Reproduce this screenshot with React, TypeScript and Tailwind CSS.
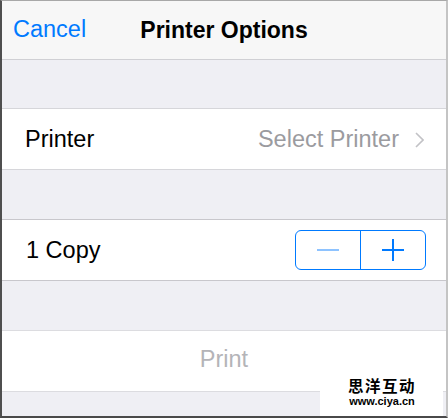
export default function App() {
  return (
    <main
      className="relative h-[418px] w-[448px] overflow-hidden border-t border-r-2 border-b-2 border-l-2 border-t-[#a8a8a8] border-r-[#c4c4c4] border-b-[#4a4a4a] border-l-[#4f4f4f] bg-[#efeff4]"
      style={{ fontFamily: '"Liberation Sans", Arial, sans-serif' }}
    >
      {/* Nav bar */}
      <header className="relative flex h-[59px] items-center border-b border-[#d0d0d4] bg-[#f7f7f7] px-[11px]">
        <button className="text-[23.5px] text-[#007aff]">Cancel</button>
        <h1 className="pointer-events-none absolute left-0 right-0 text-center text-[23px] font-bold text-black">
          Printer Options
        </h1>
      </header>

      <div className="h-[48px]" />

      {/* Printer row */}
      <div className="flex h-[62px] items-center border-y border-[#d6d6da] bg-white pl-[23px] pr-[22px] pt-[2px]">
        <span className="flex-1 text-[23.5px] text-black">Printer</span>
        <span className="text-[23.5px] text-[#9b9b9f]">Select Printer</span>
        <svg width="9" height="16" viewBox="0 0 9 16" className="ml-[16px]">
          <path d="M1 1l7 7-7 7" fill="none" stroke="#c2c2c6" strokeWidth="1.6" />
        </svg>
      </div>

      <div className="h-[49px]" />

      {/* Copies row */}
      <div className="flex h-[62px] items-center border-y border-[#c8c7cc] bg-white pl-[24px] pr-[20px]">
        <span className="flex-1 pt-[2px] text-[23.5px] text-black">1 Copy</span>
        <div className="flex h-[40px] w-[131px] rounded-[6px] border border-[#007aff]">
          <button className="flex flex-1 items-center justify-center border-r border-[#007aff]">
            <span className="block h-[2px] w-[22px] bg-[#8ec3ff]" />
          </button>
          <button className="flex flex-1 items-center justify-center">
            <svg width="22" height="22" viewBox="0 0 22 22">
              <path d="M11 0v22M0 11h22" stroke="#007aff" strokeWidth="2" />
            </svg>
          </button>
        </div>
      </div>

      <div className="h-[49px]" />

      {/* Print row */}
      <div className="flex h-[62px] items-center justify-center border-y border-[#dcdce0] bg-white pb-[3px]">
        <span className="text-[23.5px] text-[#b4b4b8]">Print</span>
      </div>

      {/* Watermark */}
      <div className="absolute bottom-0 right-[3px] h-[27px] w-[123px] bg-white" />
      <div className="absolute bottom-[9px] right-[30px] flex flex-col items-center">
        <span
          className="h-[19px] text-[15.5px] leading-[19px] font-bold tracking-[1.5px] text-black"
          style={{
            fontFamily: '"Noto Sans CJK SC", sans-serif',
            textShadow: "1px 0 #fff, -1px 0 #fff, 0 1px #fff, 0 -1px #fff",
          }}
        >
          思洋互动
        </span>
        <span
          className="mt-[1px] h-[11px] text-[11px] leading-[11px] font-bold text-black"
          style={{ textShadow: "1px 0 #fff, -1px 0 #fff, 0 1px #fff, 0 -1px #fff" }}
        >
          www.ciya.cn
        </span>
      </div>
    </main>
  );
}
